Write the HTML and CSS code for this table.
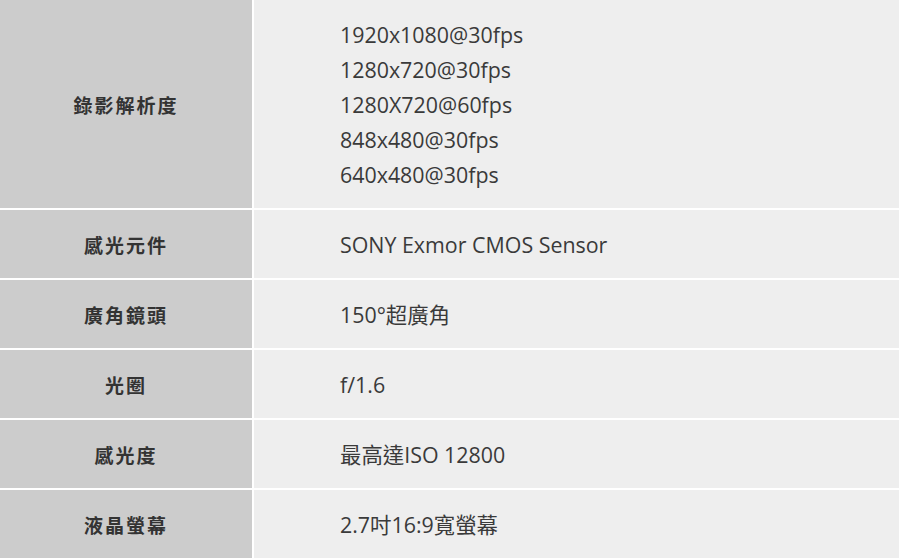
FILE: index.html
```html
<!DOCTYPE html>
<html lang="zh-Hant">

<head>
  <meta charset="UTF-8">
  <meta name="viewport" content="width=device-width, initial-scale=1.0">
  <title>產品規格</title>
  <link rel="stylesheet" href="styles.css">
</head>

<body>
  <table class="spec">
    <tr>
      <th>錄影解析度</th>
      <td>
        1920x1080@30fps<br>
        1280x720@30fps<br>
        1280X720@60fps<br>
        848x480@30fps<br>
        640x480@30fps
      </td>
    </tr>
    <tr>
      <th>感光元件</th>
      <td>SONY Exmor CMOS Sensor</td>
    </tr>
    <tr>
      <th>廣角鏡頭</th>
      <td>150°超廣角</td>
    </tr>
    <tr>
      <th>光圈</th>
      <td>f/1.6</td>
    </tr>
    <tr>
      <th>感光度</th>
      <td>最高達ISO 12800</td>
    </tr>
    <tr>
      <th>液晶螢幕</th>
      <td>2.7吋16:9寬螢幕</td>
    </tr>
  </table>
</body>

</html>
```

FILE: styles.css
```css
body {
  margin: 0;
  background-color: #fff;
  font-family: "Open Sans", "Noto Sans CJK TC", sans-serif;
  color: #333;
}

.spec {
  width: 100%;
  border-collapse: collapse;
}

.spec th,
.spec td {
  padding: 17px 0 16px;
  line-height: 35px;
  vertical-align: middle;
  border-bottom: 2px solid #fff;
}

/* 左側標題欄 */
.spec th {
  width: 252px;
  background-color: #cccccc;
  font-family: "Noto Sans CJK TC", sans-serif;
  font-size: 19px;
  font-weight: bold;
  letter-spacing: 2px;
  text-align: center;
  border-right: 2px solid #fff;
}

/* 右側內容 */
.spec td {
  padding-left: 86px;
  background-color: #eeeeee;
  font-size: 21.4px;
  color: #3a3a3a;
  text-align: left;
}
```
